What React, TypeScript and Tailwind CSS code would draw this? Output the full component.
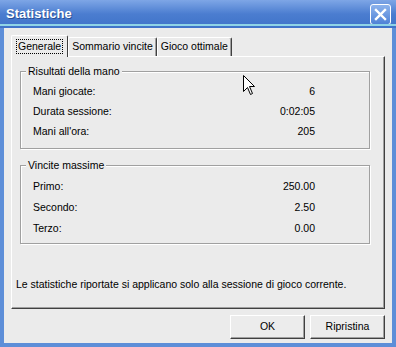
import React from "react";

const font = { fontFamily: '"Liberation Sans", Arial, sans-serif' };

function Row({ label, value, h }: { label: string; value: string; h: string }) {
  return (
    <div className={`flex ${h} items-center pl-[12px] pr-[54px] text-[10.5px] text-black`}>
      <span className="flex-1">{label}</span>
      <span>{value}</span>
    </div>
  );
}

function Group({
  title,
  rows,
  tall,
  pb,
}: {
  title: string;
  rows: [string, string][];
  tall?: boolean;
  pb: string;
}) {
  return (
    <div
      className={`relative ml-[8px] mr-[14px] border border-[#a0a0a0] shadow-[inset_1px_1px_0_#ffffff,1px_1px_0_#ffffff] pt-[10px] ${pb}`}
    >
      <span className="absolute left-[5px] top-[-8px] bg-[#ebebeb] px-[2px] text-[10.5px] leading-[14px] text-black">
        {title}
      </span>
      {rows.map(([l, v]) => (
        <Row key={l} label={l} value={v} h={tall ? "h-[21px]" : "h-[20px]"} />
      ))}
    </div>
  );
}

function Btn({ children }: { children: React.ReactNode }) {
  return (
    <div className="flex h-[24px] w-[75px] items-center justify-center border border-t-white border-l-white border-r-[#404040] border-b-[#404040] bg-[#ececec] text-[10.5px] text-black shadow-[inset_-1px_-1px_0_#a0a0a0]">
      {children}
    </div>
  );
}

export default function App() {
  return (
    <div style={font} className="relative h-[347px] w-[396px] overflow-hidden bg-[#5d8ed8] flex flex-col">
      {/* title bar */}
      <div className="relative flex h-[28px] items-center bg-gradient-to-b from-[#7ea6e6] via-[#4b7dd0] to-[#3f73c9] px-[6px]">
        <span className="text-[13px] font-bold text-white [text-shadow:1px_1px_0_#2a4f93]">Statistiche</span>
        <div className="absolute bottom-[2px] left-0 right-0 h-[2px] bg-[#8fd4e6]" />
        <div className="ml-auto mr-[-1px] flex h-[21px] w-[21px] items-center justify-center rounded-[3px] border border-white bg-gradient-to-b from-[#8cb2ec] to-[#4f82d6]">
          <svg width="13" height="13" viewBox="0 0 13 13">
            <path d="M2 2 L11 11 M11 2 L2 11" stroke="white" strokeWidth="2.4" strokeLinecap="square" />
          </svg>
        </div>
      </div>
      {/* body */}
      <div className="mx-[4px] mb-[4px] flex flex-1 flex-col bg-[#ebebeb] px-[7px] pt-[8px]">
        {/* tabs */}
        <div className="flex h-[20px] items-end text-[10.5px] text-black">
          <div className="relative z-10 mb-[-1px] flex h-[22px] items-center border border-b-0 border-t-white border-l-white border-r-[#404040] bg-[#ebebeb] px-[4px] pl-[4px] rounded-t-[2px]">
            <span className="border border-dotted border-black px-[1px] leading-[13px]">Generale</span>
          </div>
          <div className="flex h-[19px] items-center border border-b-0 border-t-white border-l-white border-r-[#404040] shadow-[inset_-1px_0_0_#a0a0a0] px-[3px] rounded-t-[2px]">
            Sommario vincite
          </div>
          <div className="flex h-[19px] items-center border border-b-0 border-t-white border-l-white border-r-[#404040] shadow-[inset_-1px_0_0_#a0a0a0] px-[3px] rounded-t-[2px]">
            Gioco ottimale
          </div>
        </div>
        {/* panel */}
        <div className="flex h-[253px] flex-col border border-t-white border-l-white border-r-[#404040] border-b-[#404040] shadow-[inset_-1px_-1px_0_#a0a0a0] pt-[14px]">
          <Group
            title="Risultati della mano"
            pb="pb-[6px]"
            rows={[
              ["Mani giocate:", "6"],
              ["Durata sessione:", "0:02:05"],
              ["Mani all'ora:", "205"],
            ]}
          />
          <div className="h-[16px]" />
          <Group
            title="Vincite massime"
            tall
            pb="pb-[4px]"
            rows={[
              ["Primo:", "250.00"],
              ["Secondo:", "2.50"],
              ["Terzo:", "0.00"],
            ]}
          />
          <div className="mt-auto mb-[15px] pl-[4px] text-[10.5px] text-black">
            Le statistiche riportate si applicano solo alla sessione di gioco corrente.
          </div>
        </div>
        {/* buttons */}
        <div className="mt-[6px] flex justify-end gap-[5px] pr-[0px]">
          <Btn>OK</Btn>
          <Btn>Ripristina</Btn>
        </div>
      </div>
      {/* cursor */}
      <svg className="absolute left-[243px] top-[75px]" width="13" height="21" viewBox="0 0 13 21">
        <path d="M0.5 0.5 L0.5 16.5 L4.5 12.5 L7.5 19.5 L9.5 18.5 L6.5 11.5 L11.5 11.5 Z" fill="white" stroke="black" strokeWidth="1" />
      </svg>
    </div>
  );
}
